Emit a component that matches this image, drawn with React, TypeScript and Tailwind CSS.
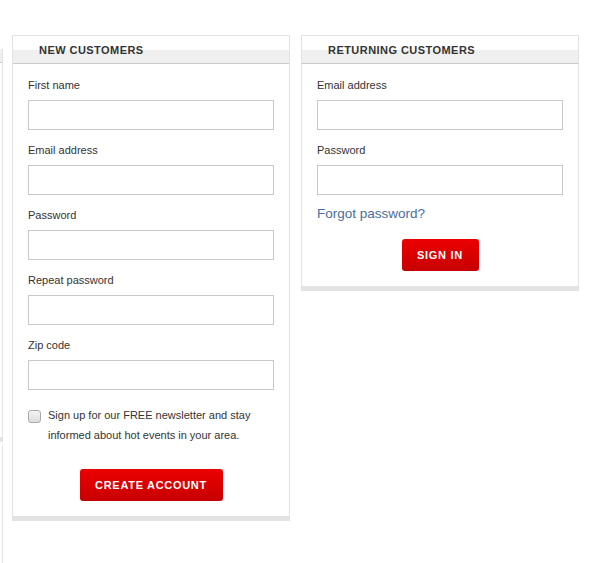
import * as React from "react"

const FONT = "font-['Liberation_Sans',Arial,sans-serif]"

function Field({ label, type = "text" }: { label: string; type?: string }) {
  return (
    <div className="mb-[10px]">
      <label className="block text-[11px] leading-[20px] text-[#333]">{label}</label>
      <input
        type={type}
        className="mt-[5px] block h-[30px] w-full border border-[#c9c9c9] bg-white px-2 text-[12px] outline-none"
      />
    </div>
  )
}

function Panel({ title, children }: { title: string; children: React.ReactNode }) {
  return (
    <div className="w-[278px] shrink-0">
      <div className="border border-b-0 border-[#e2e2e2] bg-white">
        <div className="h-[28px] border-b border-[#cbcbcb] bg-[linear-gradient(to_bottom,#fff_14px,#efefef_14px)]">
          <h2 className="pt-[2px] pl-[26px] text-[11px] font-bold leading-[25px] tracking-[0.45px] text-[#333]">
            {title}
          </h2>
        </div>
        <div className="px-[15px] pt-[11px] pb-[15px]">{children}</div>
      </div>
      <div className="h-[5px] bg-[#e3e3e3]" />
    </div>
  )
}

function RedButton({ children, width }: { children: React.ReactNode; width: string }) {
  return (
    <button
      type="button"
      className={`${width} mx-auto block h-[32px] rounded-[3px] bg-[linear-gradient(to_bottom,#ec0000,#c70000)] text-[11px] font-bold tracking-[0.7px] text-white`}
    >
      {children}
    </button>
  )
}

export default function App() {
  return (
    <div className={`${FONT} flex h-[563px] w-[589px] items-start overflow-hidden bg-white pt-[35px]`}>
      {/* edge of neighbouring column on the left */}
      <div className="w-[3px] shrink-0">
        <div className="h-[388px] border-r border-[#e2e2e2]">
          <div className="mt-[14px] h-[14px] border-b border-[#cbcbcb] bg-[#efefef]" />
        </div>
        <div className="h-[5px] bg-[#e3e3e3]" />
        <div className="mt-[3px] h-[123px] border-r border-[#e2e2e2]" />
      </div>

      <div className="ml-[9px] flex gap-[11px]">
        <Panel title="NEW CUSTOMERS">
          <Field label="First name" />
          <Field label="Email address" />
          <Field label="Password" type="password" />
          <Field label="Repeat password" type="password" />
          <Field label="Zip code" />
          <div className="mt-[15px] flex gap-[7px]">
            <span className="mt-[5px] h-[13px] w-[13px] shrink-0 rounded-[3px] border border-[#a9a9a9] bg-[linear-gradient(to_bottom,#f4f4f4,#dcdcdc)]" />
            <p className="text-[11px] leading-[20px] text-[#333]">
              Sign up for our FREE newsletter and stay informed about hot events in your area.
            </p>
          </div>
          <div className="mt-[24px]">
            <RedButton width="w-[143px]">CREATE ACCOUNT</RedButton>
          </div>
        </Panel>

        <Panel title="RETURNING CUSTOMERS">
          <Field label="Email address" />
          <Field label="Password" type="password" />
          <a href="#" className="-mt-px block text-[13.5px] leading-[20px] text-[#4a6d9c]">
            Forgot password?
          </a>
          <div className="mt-[15px]">
            <RedButton width="w-[77px]">SIGN IN</RedButton>
          </div>
        </Panel>
      </div>

      {/* edge of neighbouring column on the right */}
      <div className="ml-[10px] h-[528px] w-[2px] shrink-0 border-l border-[#e2e2e2]" />
    </div>
  )
}
